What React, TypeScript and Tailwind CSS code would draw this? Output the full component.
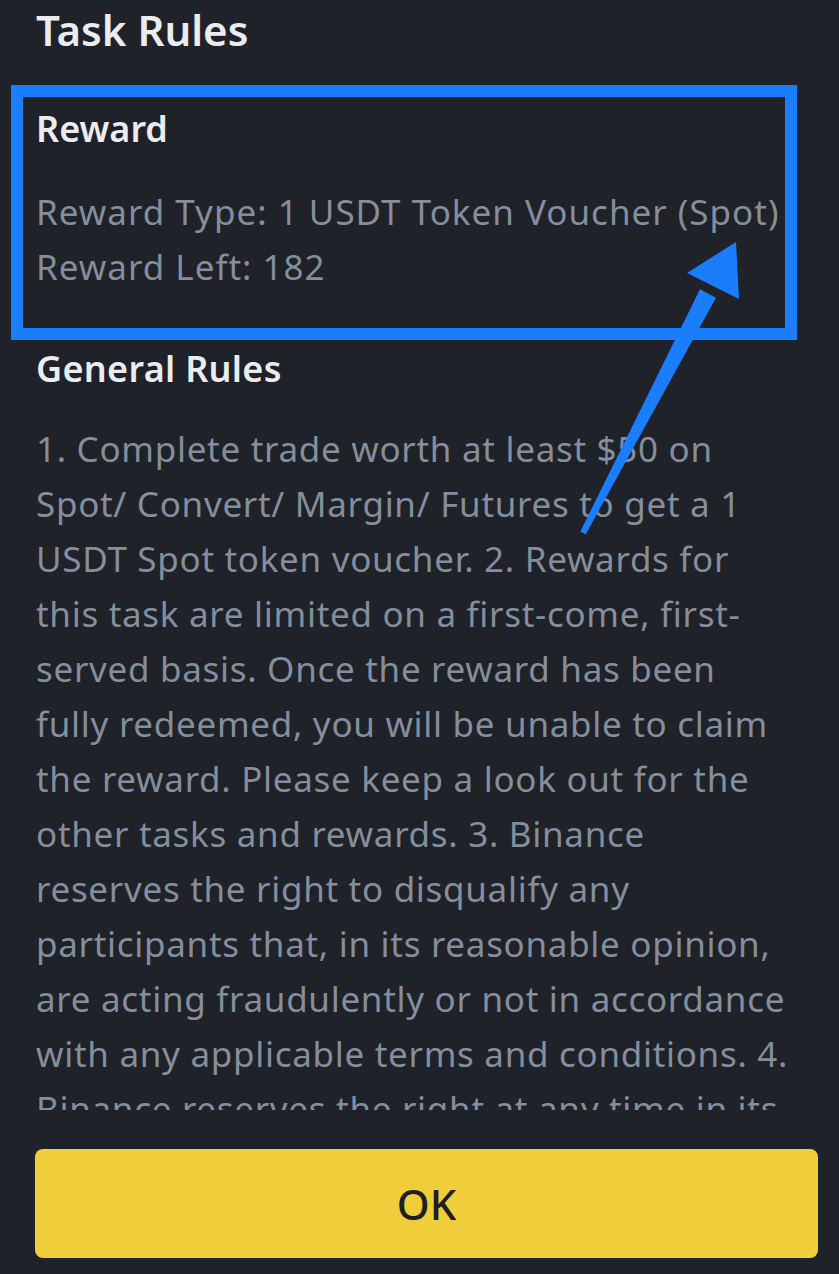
const ruleLines = [
  "1. Complete trade worth at least $50 on",
  "Spot/ Convert/ Margin/ Futures to get a 1",
  "USDT Spot token voucher. 2. Rewards for",
  "this task are limited on a first-come, first-",
  "served basis. Once the reward has been",
  "fully redeemed, you will be unable to claim",
  "the reward. Please keep a look out for the",
  "other tasks and rewards. 3. Binance",
  "reserves the right to disqualify any",
  "participants that, in its reasonable opinion,",
  "are acting fraudulently or not in accordance",
  "with any applicable terms and conditions. 4.",
  "Binance reserves the right at any time in its",
];

function Arrow() {
  return (
    <svg
      className="absolute left-0 top-0 pointer-events-none"
      width="839"
      height="1274"
      viewBox="0 0 839 1274"
    >
      <polygon points="580.3,531.6 585.7,534.4 716,297.7 700,289.3" fill="#1a7dfb" />
      <polygon points="736,242 687,273 739,299" fill="#1a7dfb" />
    </svg>
  );
}

export default function App() {
  return (
    <div
      className="relative w-[839px] h-[1274px] overflow-hidden bg-[#1f2228] flex flex-col"
      style={{ fontFamily: '"Noto Sans", "Open Sans", sans-serif' }}
    >
      <div className="h-[1110px] overflow-hidden pl-[36px] pr-[20px]">
        <h1 className="pt-[2px] text-[42px] leading-[55px] font-semibold text-[#eaecef]">Task Rules</h1>

        <div className="mt-[28px] ml-[-25px] w-[786px] border-[12px] border-[#1a7dfb] pl-[13px] pt-[4px] pb-[34px]">
          <h3 className="text-[36px] leading-[55px] font-semibold text-[#eaecef]">Reward</h3>
          <div className="mt-[28px] text-[35px] leading-[55px] tracking-[1px] text-[#848e9c]">
            <p className="whitespace-nowrap">Reward Type: 1 USDT Token Voucher (Spot)</p>
            <p className="whitespace-nowrap">Reward Left: 182</p>
          </div>
        </div>

        <h3 className="mt-[1px] text-[36px] leading-[55px] font-semibold tracking-[0.3px] text-[#eaecef]">General Rules</h3>
        <div className="mt-[25px] text-[35px] leading-[55px] tracking-[0.7px] text-[#848e9c]">
          {ruleLines.map((line) => (
            <p key={line} className="whitespace-nowrap">{line}</p>
          ))}
        </div>
      </div>

      <div className="flex-1 pl-[35px] pr-[21px] pt-[39px] pb-[16px]">
        <button className="w-full h-[109px] rounded-[8px] bg-[#f0cd3a] text-[42px] font-medium text-[#1e2026]">
          OK
        </button>
      </div>

      <Arrow />
    </div>
  );
}
